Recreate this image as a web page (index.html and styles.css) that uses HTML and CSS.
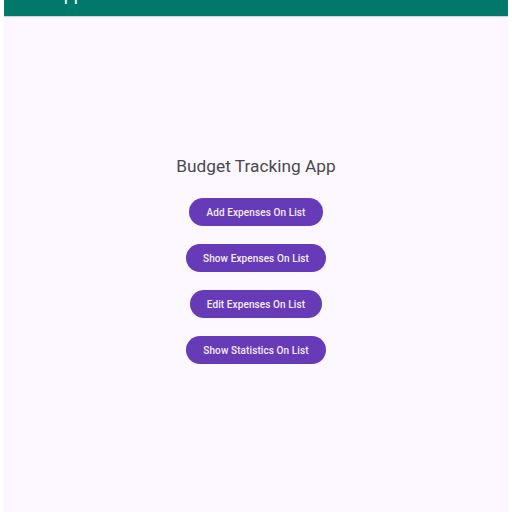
FILE: index.html
```html
<!DOCTYPE html>
<html>
<head>
<meta charset="utf-8">
<link rel="stylesheet" href="styles.css">
</head>
<body>
<div class="frame">
  <header class="appbar"><span class="appbar-title">App Menu</span></header>
  <main class="content">
    <h1 class="title">Budget Tracking App</h1>
    <div class="actions">
      <button class="btn">Add Expenses On List</button>
      <button class="btn">Show Expenses On List</button>
      <button class="btn">Edit Expenses On List</button>
      <button class="btn">Show Statistics On List</button>
    </div>
  </main>
</div>
</body>
</html>
```
FILE: styles.css
```css
html, body {
  margin: 0;
  padding: 0;
  background: #ffffff;
  height: 100%;
}
body {
  font-family: Roboto, "Noto Sans", sans-serif;
}
.frame {
  margin: 0 4px;
  height: 512px;
  display: flex;
  flex-direction: column;
  background: #fdf7ff;
  overflow: hidden;
}
.appbar {
  height: 16px;
  background: #00796b;
  box-shadow: 0 1px 1px rgba(0,0,0,0.15);
  display: flex;
  align-items: flex-end;
  padding-left: 48px;
  flex: none;
}
.appbar-title {
  color: #ffffff;
  font-size: 18px;
  line-height: 18px;
  margin-bottom: 13px;
}
.content {
  flex: 1;
  display: flex;
  flex-direction: column;
  align-items: center;
  padding-top: 139px;
}
.title {
  margin: 0;
  font-size: 17.3px;
  font-weight: 400;
  color: #4a4a4e;
  line-height: 22px;
}
.actions {
  margin-top: 21px;
  display: flex;
  flex-direction: column;
  align-items: center;
  gap: 18px;
}
.btn {
  height: 28px;
  border: none;
  border-radius: 14px;
  background: #673ab7;
  color: #f4eefc;
  font-family: Roboto, sans-serif;
  font-size: 10px;
  font-weight: 500;
  letter-spacing: 0.1px;
  padding: 0 17px;
}
```
